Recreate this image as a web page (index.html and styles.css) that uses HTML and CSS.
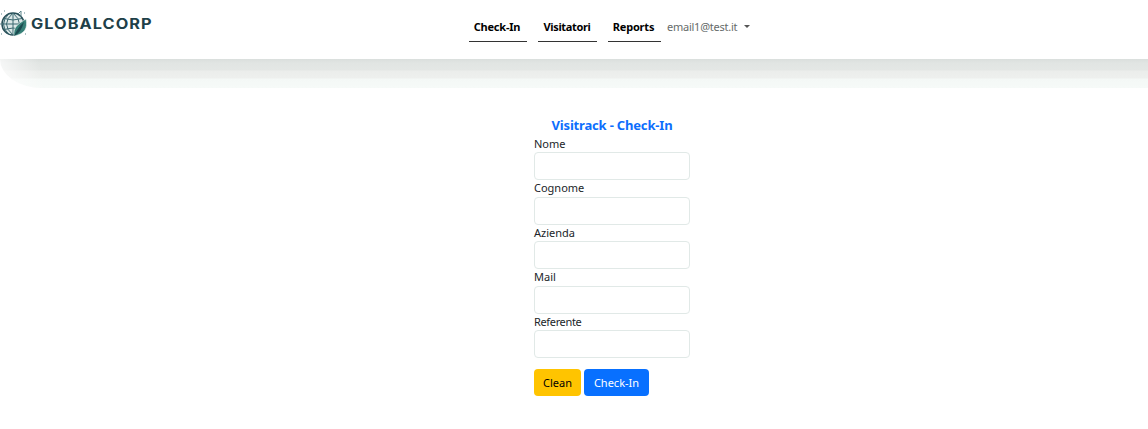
FILE: index.html
```html
<!DOCTYPE html>
<html lang="it">
<head>
<meta charset="utf-8">
<title>Visitrack - Check-In</title>
<link rel="stylesheet" href="styles.css">
</head>
<body>
<header class="navbar">
  <a class="brand">
    <svg class="globe" viewBox="0 0 28 28" fill="none">
      <circle cx="13" cy="14" r="11" fill="#dce8e8" stroke="#294f58" stroke-width="1.5"/>
      <path d="M13 3v22M2 14h22M4 8.500q9 3 18 0M4 19.500q9-3 18 0M13 3q-13 11 0 22M13 3q13 11 0 22M9 3.500q-11 11 0 21" stroke="#3b6870" stroke-width="1"/>
      <path d="M14 26C13 17 18 14 26 9c2 9-1 15-12 17Z" fill="#378078" stroke="#edf5f4" stroke-width=".6"/>
      <path d="M14 26q4-9 10-14-3 11-10 14Z" fill="#1c4a50"/>
      <path d="M18 4l3-3v6M1 4h1M4 1h1M24 3h1M1 24h1M25 24h1M0 14h1" stroke="#5d858b" stroke-width="1"/>
    </svg>
    <span class="brand-name">GLOBALCORP</span>
  </a>
  <nav class="menu">
    <a class="link checkin"><span>Check-In</span></a>
    <a class="link visitors"><span>Visitatori</span></a>
    <a class="link reports"><span>Reports</span></a>
    <a class="account"><span>email1@test.it</span><i class="caret"></i></a>
  </nav>
</header>
<main>
  <form class="form">
    <h1 class="title">Visitrack - Check-In</h1>
    <label class="field"><span>Nome</span><input class="input" type="text"></label>
    <label class="field"><span>Cognome</span><input class="input" type="text"></label>
    <label class="field"><span>Azienda</span><input class="input" type="text"></label>
    <label class="field"><span>Mail</span><input class="input" type="text"></label>
    <label class="field"><span class="tight">Referente</span><input class="input" type="text"></label>
    <div class="actions">
      <button class="btn clean" type="button">Clean</button>
      <button class="btn submit" type="button">Check-In</button>
    </div>
  </form>
</main>
</body>
</html>
```
FILE: styles.css
```css
* { box-sizing: border-box; }
body {
  margin: 0;
  background: #fff;
  color: #212529;
  font: 11px/17px "Noto Sans", sans-serif;
  overflow: hidden;
}
.navbar {
  position: relative;
  display: flex;
  height: 59px;
  background: #fff;
}
.navbar::after {
  content: "";
  position: absolute;
  left: 0;
  right: 0;
  top: 59px;
  height: 29px;
  border-bottom-left-radius: 42px 29px;
  background:
    linear-gradient(75deg, rgba(255,255,255,.8), rgba(255,255,255,0) 45px),
    linear-gradient(#dadfdd 0, #e1e5e3 4px, #e4e7e5 11px, #ebedeb 12px, #eef0ee 19px, #f4f8f6 20px, #f6faf8 29px);
}
.brand {
  display: flex;
  width: 469px;
  height: 48px;
  align-items: center;
}
.globe { width: 28px; height: 28px; flex: none; }
.brand-name {
  margin-left: 3px;
  color: #203f48;
  font: 700 14px/20px Inter, sans-serif;
  letter-spacing: .9px;
  transform: scaleX(1.165);
  transform-origin: left center;
}
.menu { display: flex; height: 42px; }
.link {
  display: flex;
  justify-content: center;
  padding-top: 18px;
  border-bottom: 1px solid #333;
  color: #000;
  font-weight: 700;
  white-space: nowrap;
}
.checkin { width: 58px; margin-right: 11px; padding-right: 2px; letter-spacing: -.2px; }
.visitors { width: 59px; margin-right: 11px; padding-right: 1px; letter-spacing: -.35px; }
.reports { width: 53px; margin-right: 6px; padding-right: 2px; letter-spacing: -.2px; }
.account {
  display: flex;
  padding-top: 18px;
  color: #666b6a;
  letter-spacing: -.25px;
}
.caret {
  width: 0;
  height: 0;
  margin: 7px 0 0 7px;
  border: 3px solid transparent;
  border-top-color: #555;
  border-bottom: 0;
}
.form { width: 156px; margin: 58px 0 0 534px; }
.title {
  margin: 0;
  height: 17.5px;
  color: #0d6efd;
  font-size: 13px;
  line-height: 17px;
  letter-spacing: -.18px;
  text-align: center;
  white-space: nowrap;
}
.field { display: block; height: 44.5px; }
.field span { display: block; height: 17.500px; line-height: 18px; }
.field .tight { letter-spacing: -.35px; }
.input {
  display: block;
  width: 156px;
  height: 28px;
  border: 1px solid #e1e9e7;
  border-radius: 4px;
  background: #fff;
  outline: 0;
}
.actions { display: flex; gap: 3px; margin-top: 12px; }
.btn {
  height: 27px;
  padding: 0;
  border: 0;
  border-radius: 4px;
  font: 11px/26px "Noto Sans", sans-serif;
}
.clean { width: 47px; background: #ffc400; color: #000; }
.submit { width: 65px; background: #0870ff; color: #fff; }
```
